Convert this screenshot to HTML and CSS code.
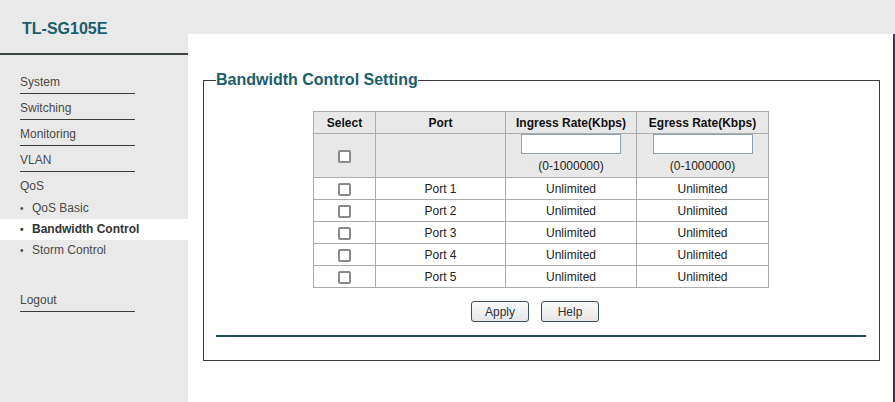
FILE: index.html
```html
<!DOCTYPE html>
<html>
<head>
<meta charset="utf-8">
<title>TL-SG105E</title>
<link rel="stylesheet" href="styles.css">
</head>
<body>
<div class="page">
  <aside class="sidebar">
    <div class="brand">TL-SG105E</div>
    <nav class="menu">
      <a class="item">System</a>
      <a class="item">Switching</a>
      <a class="item">Monitoring</a>
      <a class="item">VLAN</a>
      <a class="item group">QoS</a>
      <ul class="sub">
        <li>QoS Basic</li>
        <li class="active">Bandwidth Control</li>
        <li>Storm Control</li>
      </ul>
      <a class="item logout">Logout</a>
    </nav>
  </aside>
  <main class="content">
    <fieldset class="panel">
      <legend>Bandwidth Control Setting</legend>
      <table class="grid">
        <colgroup>
          <col class="c-sel"><col class="c-port"><col class="c-in"><col class="c-eg">
        </colgroup>
        <thead>
          <tr><th>Select</th><th>Port</th><th>Ingress Rate(Kbps)</th><th>Egress Rate(Kbps)</th></tr>
        </thead>
        <tbody>
          <tr class="edit">
            <td><input class="chk" type="checkbox"></td>
            <td></td>
            <td><input class="rate" type="text"><div class="range">(0-1000000)</div></td>
            <td><input class="rate" type="text"><div class="range">(0-1000000)</div></td>
          </tr>
          <tr><td><input class="chk" type="checkbox"></td><td>Port 1</td><td>Unlimited</td><td>Unlimited</td></tr>
          <tr><td><input class="chk" type="checkbox"></td><td>Port 2</td><td>Unlimited</td><td>Unlimited</td></tr>
          <tr><td><input class="chk" type="checkbox"></td><td>Port 3</td><td>Unlimited</td><td>Unlimited</td></tr>
          <tr><td><input class="chk" type="checkbox"></td><td>Port 4</td><td>Unlimited</td><td>Unlimited</td></tr>
          <tr><td><input class="chk" type="checkbox"></td><td>Port 5</td><td>Unlimited</td><td>Unlimited</td></tr>
        </tbody>
      </table>
      <div class="actions">
        <button class="btn">Apply</button>
        <button class="btn">Help</button>
      </div>
      <div class="rule"></div>
    </fieldset>
  </main>
</div>
</body>
</html>
```

FILE: styles.css
```css
* { box-sizing: border-box; }
html, body { margin: 0; padding: 0; }
body {
  background: #e9e9e9;
  font-family: "Liberation Sans", Arial, sans-serif;
  font-size: 12px;
  color: #333;
}
.page {
  display: flex;
  min-height: 402px;
}
.sidebar {
  width: 188px;
  flex: 0 0 188px;
}
.brand {
  height: 55px;
  padding: 19px 0 0 22px;
  font-size: 16px;
  line-height: 20px;
  font-weight: bold;
  color: #1b5d6b;
  border-bottom: 2px solid #3c4346;
}
.menu {
  display: flex;
  flex-direction: column;
  padding-top: 13px;
}
.item {
  display: block;
  margin-left: 20px;
  width: 115px;
  padding: 5px 0 2px;
  line-height: 18px;
  color: #4a4a4a;
  border-bottom: 1px solid #3a3a3a;
}
.item.group {
  border-bottom: none;
  padding-bottom: 3px;
}
.item.logout {
  margin-top: 25px;
}
.sub {
  list-style: none;
  margin: 0;
  padding: 0;
}
.sub li {
  line-height: 21px;
  padding-left: 20px;
  color: #4a4a4a;
}
.sub li::before {
  content: "\2022";
  display: inline-block;
  width: 12px;
  font-size: 10px;
}
.sub li.active {
  background: #fff;
  font-weight: bold;
  color: #333;
}
.content {
  flex: 1;
  margin-top: 34px;
  background: #fff;
  border-right: 2px solid #3f3556;
  padding: 0 13px 0 15px;
}
.panel {
  margin: 37px 0 0 0;
  padding: 0 13px 23px 12px;
  border: 1px solid #3a3a3a;
  min-width: 0;
}
.panel legend {
  padding: 0;
  font-size: 16px;
  line-height: 18px;
  font-weight: bold;
  color: #1b5d6b;
}
.grid {
  margin: 22px auto 0;
  border-collapse: collapse;
  table-layout: fixed;
  width: 455px;
}
.c-sel { width: 62px; }
.c-port { width: 130px; }
.c-in { width: 131px; }
.c-eg { width: 132px; }
.grid th, .grid td {
  border: 1px solid #ababab;
  height: 22px;
  padding: 0;
  text-align: center;
  vertical-align: middle;
  font-size: 12px;
  color: #222;
}
.grid th {
  background: #e8e8e8;
  font-weight: bold;
  color: #111;
}
.grid tr.edit td {
  background: #e8e8e8;
  height: 44px;
}
.grid tr.edit td:nth-child(3), .grid tr.edit td:nth-child(4) {
  vertical-align: top;
  padding-top: 0;
}
.chk {
  -webkit-appearance: none;
  appearance: none;
  display: inline-block;
  margin: 0;
  width: 13px;
  height: 13px;
  vertical-align: middle;
  border: 2px solid #8a8a8a;
  border-radius: 2px;
  background: #fff;
}
.rate {
  display: block;
  width: 100px;
  height: 20px;
  margin: 0 auto;
  border: 1px solid #8ea3b8;
  background: #fff;
  padding: 0 3px;
  font-size: 12px;
}
.range {
  padding-top: 2px;
  line-height: 20px;
}
.actions {
  display: flex;
  justify-content: center;
  gap: 12px;
  margin-top: 13px;
  padding-right: 12px;
}
.btn {
  width: 58px;
  height: 21px;
  padding: 0;
  font-family: "Liberation Sans", Arial, sans-serif;
  font-size: 12px;
  color: #333;
  border: 1px solid #3d4c5c;
  border-radius: 3px;
  background: linear-gradient(#fafafa, #e6e6e6);
}
.rule {
  margin-top: 13px;
  height: 2px;
  background: #264b57;
}
```
